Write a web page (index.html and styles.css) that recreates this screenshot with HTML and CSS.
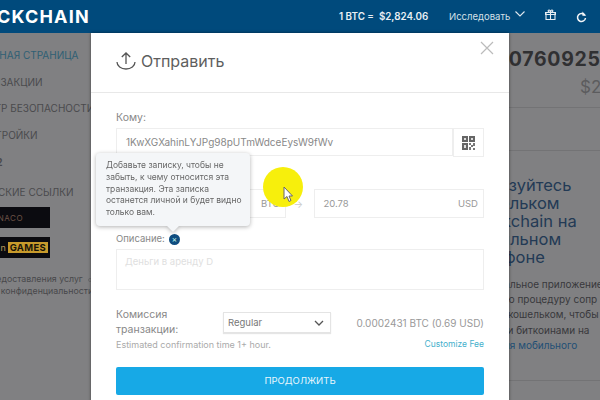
FILE: index.html
```html
<!DOCTYPE html>
<html lang="ru">
  <head>
    <meta charset="UTF-8" />
    <title>Blockchain</title>
    <link rel="stylesheet" href="styles.css">
  </head>
  <body>
    <div class="topbar">
      <div class="logo">CKCHAIN</div>
      <div class="rate">1 BTC = &nbsp;$2,824.06</div>
      <div class="explore">Исследовать</div>
      <svg class="chev" width="10" height="6" viewBox="0 0 10 6"><path d="M0.500 0.500L5 5l4.500-4.500" fill="none" stroke="#dfe8ef" stroke-width="1.100"/></svg>
      <svg class="gift" width="11" height="11" viewBox="0 0 11 11"><path d="M1 3.500h9v7H1zM0.500 3.500h10v2h-10zM5.500 3.500v7M5.500 3.500C3 3.500 2.500 1 4 1c1 0 1.500 1.500 1.500 2.500C5.500 2.500 6 1 7 1c1.500 0 1 2.500-1.500 2.500z" fill="none" stroke="#e6edf3" stroke-width="1.100"/></svg>
      <svg class="refresh" width="11" height="12" viewBox="0 0 11 12"><path d="M8.800 4.200A4 4 0 1 0 9.500 7" fill="none" stroke="#f2f5f8" stroke-width="1.500"/><path d="M6.400 0.500v4.300h3.800z" fill="#f2f5f8"/></svg>
    </div>

    <div class="page">
      <div class="sidebar">
        <div class="nav-item active">ГЛАВНАЯ СТРАНИЦА</div>
        <div class="nav-item">ТРАНЗАКЦИИ</div>
        <div class="nav-item">ЦЕНТР БЕЗОПАСНОСТИ</div>
        <div class="nav-item">НАСТРОЙКИ</div>
        <div class="nav-item num">12</div>
        <div class="nav-item partner">ПАРТНЕРСКИЕ ССЫЛКИ</div>
        <div class="banner banner-one">MONACO</div>
        <div class="banner banner-two">n <b>GAMES</b></div>
        <div class="terms">
          <div>Условия предоставления услуг <span class="ring"></span></div>
          <div>Политика конфиденциальности <span class="ring"></span></div>
        </div>
      </div>
      <div class="content">
        <div class="balance">0.00760925 BTC</div>
        <div class="fiat">$21.49</div>
        <div class="rule rule-one"></div>
        <div class="rule rule-two"></div>
        <h2 class="promo">Пользуйтесь<br>кошельком<br>Blockchain на<br>мобильном<br>телефоне</h2>
        <p class="promo-text">Официальное приложение<br>простую процедуру сопр<br>вашим кошельком, чтобы<br>платежи биткоинами на<br><span class="link">решения мобильного</span></p>
        <div class="rule rule-three"></div>
      </div>
    </div>

    <div class="modal">
      <div class="modal-head">
        <svg class="send-icon" width="20" height="18" viewBox="0 0 20 18"><path d="M10 1v11M5.800 5L10 1l4.200 4M1 10c0 4 4 7 9 7s9-3 9-7" fill="none" stroke="#555" stroke-width="1.300"/></svg>
        <span class="modal-title">Отправить</span>
        <svg class="close" width="14" height="14" viewBox="0 0 14 14"><path d="M1 1l12 12M13 1L1 13" stroke="#bbb" stroke-width="1.200"/></svg>
      </div>
      <div class="modal-body">
        <div class="label">Кому:</div>
        <div class="to-row">
          <div class="field to-field">1KwXGXahinLYJPg98pUTmWdceEysW9fWv</div>
          <div class="qr-btn">
            <svg width="13" height="14" viewBox="0 0 13 14">
              <path d="M0 0h6v6H0zM7 0h6v6H7zM0 7h6v7H0z" fill="#666"/>
              <path d="M2 2h2v2H2zM9 2h2v2H9zM2 9h2v3H2z" fill="#ddd"/>
              <path d="M7 7h2v2H7zM11 7h2v3h-2zM9 9h2v2H9zM7 11h2v3H7zM11 12h2v2h-2z" fill="#777"/>
            </svg>
          </div>
        </div>
        <div class="amount-row">
          <div class="field amount"><span>0.00735</span><span class="unit">BTC</span></div>
          <div class="arrow">→</div>
          <div class="field amount"><span>20.78</span><span class="unit">USD</span></div>
        </div>
        <div class="label desc-label">Описание: <span class="info">×</span></div>
        <div class="field note">Деньги в аренду D</div>
        <div class="fee-row">
          <div class="fee-label">Комиссия транзакции:</div>
          <div class="select">
            <span>Regular</span>
            <svg width="10" height="6" viewBox="0 0 10 6"><path d="M1 1l4 4 4-4" fill="none" stroke="#555" stroke-width="1.300"/></svg>
          </div>
          <div class="fee-value">0.0002431 BTC (0.69 USD)</div>
        </div>
        <div class="fee-row2">
          <span>Estimated confirmation time 1+ hour.</span>
          <span class="customize">Customize Fee</span>
        </div>
        <div class="continue">ПРОДОЛЖИТЬ</div>
      </div>
    </div>

    <div class="tooltip">Добавьте записку, чтобы не забыть, к чему относится эта транзакция. Эта записка останется личной и будет видно только вам.</div>
    <div class="highlight"></div>
    <svg class="pointer" width="10" height="17" viewBox="0 0 10 17"><path d="M1 1v12l3-2.500 2 5 2-1-2-4.500h3.500z" fill="#fff" stroke="#666" stroke-width="1"/></svg>
  </body>
</html>
```

FILE: styles.css
```css
* {
  box-sizing: border-box;
}

body {
  margin: 0;
  width: 600px;
  height: 400px;
  overflow: hidden;
  position: relative;
  font-family: Inter, "Noto Sans", sans-serif;
  background: #808082;
  color: #666;
}

.topbar {
  height: 33px;
  background: #004a7c;
  color: #fff;
  display: flex;
  align-items: center;
  overflow: hidden;
}
.logo {
  font-size: 18px;
  font-weight: 700;
  letter-spacing: 1.200px;
  margin-left: -3px;
  width: 342px;
  flex: none;
}
.rate {
  font-size: 9.800px;
  font-weight: 600;
  width: 110px;
  flex: none;
  color: #e9eff4;
  white-space: nowrap;
}
.explore {
  font-size: 9.500px;
  color: #d5e0e9;
  width: 66px;
  flex: none;
}
.chev {
  margin-bottom: 6px;
}
.gift {
  margin-left: 20px;
  margin-bottom: 4px;
}
.refresh {
  margin-left: 20px;
}

.page {
  display: flex;
  height: 367px;
  overflow: hidden;
}
.sidebar {
  width: 300px;
  margin-left: -26px;
  flex: none;
  padding-top: 16px;
}
.nav-item {
  font-size: 10px;
  height: 26.500px;
  color: #4a4a4d;
  white-space: nowrap;
}
.nav-item.active {
  color: #2f5f74;
}
.nav-item.num {
  font-weight: 700;
  margin-top: 1px;
  height: 30px;
  margin-left: 18px;
}
.nav-item.partner {
  height: 19px;
  margin-left: -23px;
}
.banner {
  width: 76px;
  height: 21px;
  background: #0b0b10;
  font-size: 8px;
  display: flex;
  align-items: center;
  justify-content: flex-end;
}
.banner-one {
  color: #6e5347;
  margin-top: 2px;
  padding-right: 27px;
  letter-spacing: 0.5px;
}
.banner-two {
  color: #b89a5c;
  font-size: 9px;
  margin-top: 9px;
  padding-right: 2px;
}
.banner-two b {
  background: #c79a2c;
  color: #1a1408;
  margin-left: 2px;
  padding: 0 2px;
  font-size: 9.500px;
  letter-spacing: 0.3px;
}
.terms {
  font-size: 8.800px;
  line-height: 11.800px;
  color: #48484b;
  margin-top: 15px;
  margin-left: -26px;
  white-space: nowrap;
}
.terms div + div {
  margin-left: 9px;
}
.ring {
  display: inline-block;
  width: 4px;
  height: 4px;
  border: 1px solid #6a6a6c;
  border-radius: 50%;
  margin-left: 3px;
}

.content {
  flex: 1;
  min-width: 0;
  overflow: hidden;
  padding: 14px 0 0 194px;
  color: #233a55;
  white-space: nowrap;
}
.balance {
  font-size: 19.500px;
  font-weight: 700;
  letter-spacing: 0.7px;
  margin-left: 7px;
  color: #303032;
}
.fiat {
  font-size: 17px;
  color: #5c5c5e;
  margin-left: 112px;
  margin-top: 6px;
}
.rule {
  height: 1px;
  background: #737375;
}
.rule-one {
  margin-top: 10px;
  margin-bottom: 42px;
}
.rule-two {
  margin-bottom: 25px;
}
.rule-three {
  margin-top: 27px;
}
.promo {
  font-size: 16.500px;
  line-height: 18px;
  font-weight: 400;
  margin: 0;
  color: #233a55;
}
.promo-text {
  font-size: 10px;
  line-height: 15.200px;
  margin: 11px 0 0 4px;
  color: #38383c;
}
.link {
  color: #1f4f75;
}

.modal {
  position: absolute;
  left: 91px;
  top: 33px;
  width: 418px;
  height: 380px;
  background: #fff;
  box-shadow: 0 0 3px rgba(0, 0, 0, 0.5);
}
.modal-head {
  height: 60px;
  border-bottom: 1px solid #e8e8e8;
  display: flex;
  align-items: center;
  padding-left: 25px;
  padding-bottom: 4px;
  position: relative;
}
.modal-title {
  font-size: 16px;
  color: #5e5e5e;
  margin-left: 5px;
}
.close {
  position: absolute;
  right: 15px;
  top: 8px;
}
.modal-body {
  padding: 18px 25px 0;
}
.label {
  font-size: 10.500px;
  line-height: 14px;
  color: #888;
  margin-bottom: 3px;
}
.field {
  border: 1px solid #eee;
  font-size: 10px;
  color: #888;
}
.to-row {
  display: flex;
  height: 29px;
}
.to-field {
  flex: 1;
  height: 28px;
  line-height: 27px;
  padding-left: 9px;
}
.qr-btn {
  width: 31px;
  border: 1px solid #eee;
  display: flex;
  align-items: center;
  justify-content: center;
}
.amount-row {
  display: flex;
  align-items: center;
  margin-top: 32px;
  gap: 8px;
}
.amount {
  width: 170px;
  height: 29px;
  display: flex;
  align-items: center;
  justify-content: space-between;
  padding: 0 5px 0 8px;
  font-size: 9.500px;
  color: #999;
}
.unit {
  font-size: 9.500px;
}
.arrow {
  width: 13px;
  font-size: 10px;
  color: #ccc;
}
.desc-label {
  margin-top: 14px;
  font-size: 9.500px;
  display: flex;
  align-items: center;
  gap: 4px;
}
.info {
  width: 11px;
  height: 11px;
  border-radius: 50%;
  background: #0f4d80;
  color: #cfe;
  font-size: 8px;
  line-height: 11px;
  text-align: center;
}
.note {
  height: 41px;
  padding: 6px 8px;
  font-size: 9.500px;
  color: #e0e0e0;
}
.fee-row {
  display: flex;
  align-items: center;
  margin-top: 18px;
}
.fee-label {
  width: 107px;
  font-size: 10.500px;
  line-height: 14.500px;
  color: #888;
}
.select {
  width: 108px;
  height: 21px;
  border: 1px solid #e4e4e4;
  display: flex;
  align-items: center;
  justify-content: space-between;
  padding: 0 6px 0 4px;
  font-size: 9.500px;
  color: #777;
  box-shadow: 0 1px 1px rgba(0, 0, 0, 0.1);
}
.fee-value {
  flex: 1;
  text-align: right;
  font-size: 10px;
  color: #999;
  white-space: nowrap;
}
.fee-row2 {
  display: flex;
  justify-content: space-between;
  font-size: 9px;
  color: #aaa;
  margin-top: 2px;
}
.customize {
  font-size: 8.500px;
  color: #45b0cc;
}
.continue {
  margin-top: 17px;
  height: 28px;
  line-height: 28px;
  background: #17a9e6;
  color: #e8f6fc;
  font-size: 9.500px;
  text-align: center;
  border-radius: 2px;
}

.tooltip {
  position: absolute;
  left: 96px;
  top: 153px;
  width: 154px;
  height: 73px;
  padding: 7px 7px 0 10px;
  background: #f4f6f8;
  color: #666;
  font-size: 8.500px;
  line-height: 11.800px;
  border-radius: 4px;
  filter: drop-shadow(0 1px 2px rgba(0, 0, 0, 0.3));
}
.tooltip::after {
  content: "";
  position: absolute;
  left: 71px;
  bottom: -6px;
  width: 12px;
  height: 12px;
  background: #f4f6f8;
  transform: rotate(45deg) scale(0.7);
}

.highlight {
  position: absolute;
  left: 263px;
  top: 167px;
  width: 40px;
  height: 40px;
  border-radius: 50%;
  background: #f7ef0c;
}
.pointer {
  position: absolute;
  left: 283px;
  top: 186px;
}
```
